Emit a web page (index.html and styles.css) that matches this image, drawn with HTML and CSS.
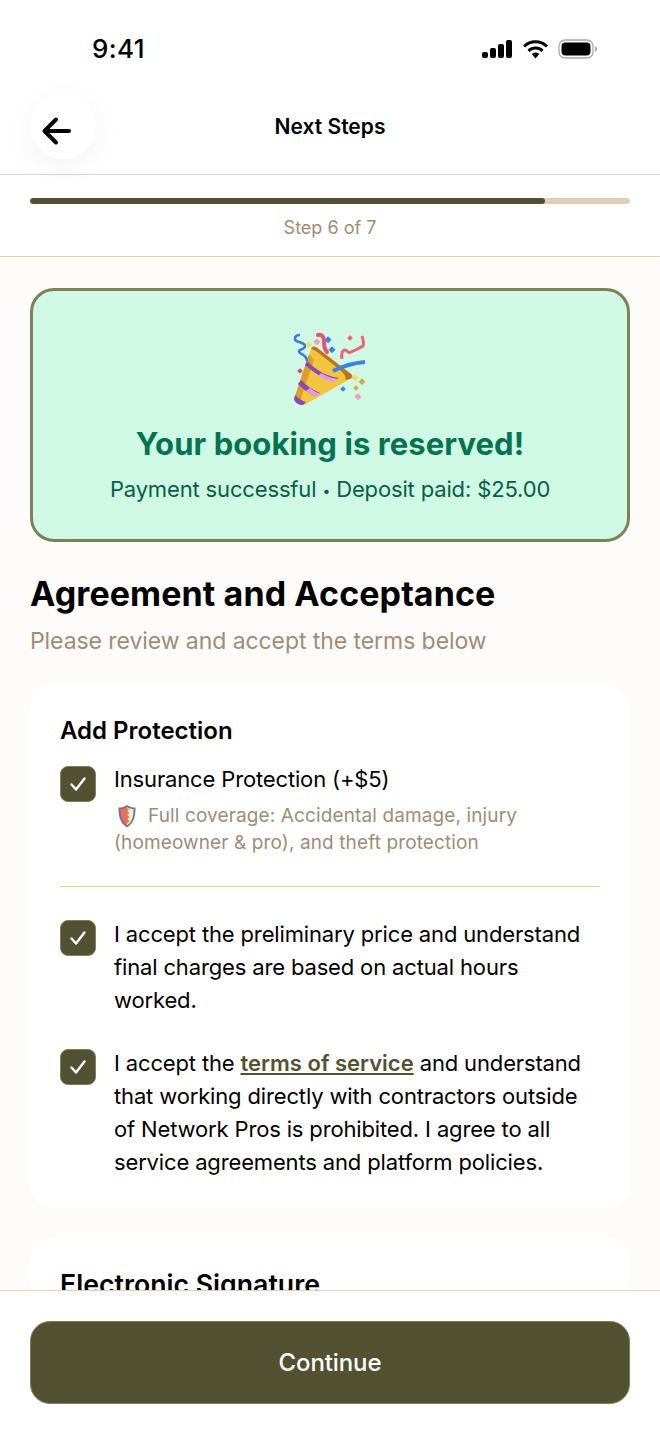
FILE: index.html
```html
<!DOCTYPE html>
<html lang="en">
<head>
  <meta charset="UTF-8">
  <meta name="viewport" content="width=device-width, initial-scale=1.0">
  <title>Next Steps</title>
  <link rel="stylesheet" href="styles.css">
</head>
<body>
  <div class="screen">
    <div class="status-bar">
      <span class="time">9:41</span>
      <div class="status-icons">
        <svg width="30" height="18" viewBox="0 0 30 18"><rect x="0" y="12" width="6" height="6" rx="2"/><rect x="8" y="8" width="6" height="10" rx="2"/><rect x="16" y="4" width="6" height="14" rx="2"/><rect x="24" y="0" width="6" height="18" rx="2"/></svg>
        <svg width="25" height="19" viewBox="0 0 25 19"><path d="M1 6.500a16.500 16.500 0 0 1 23 0" fill="none" stroke="#000" stroke-width="3"/><path d="M5.500 10.800a10.200 10.200 0 0 1 14 0" fill="none" stroke="#000" stroke-width="3"/><path d="M8.800 14a5.400 5.400 0 0 1 7.400 0l-3.700 4.500z"/></svg>
        <svg width="39" height="20" viewBox="0 0 39 20"><rect x="1" y="1" width="34" height="18" rx="6" fill="none" stroke="#a8a8a8" stroke-width="1.300"/><rect x="3.500" y="3.500" width="29" height="13" rx="4"/><path d="M37 7v6c1-.4 2-1.600 2-3s-1-2.600-2-3z" fill="#a8a8a8"/></svg>
      </div>
    </div>

    <header class="top-nav">
      <button class="back-btn" aria-label="Back">
        <svg width="32" height="32" viewBox="0 0 32 32"><path d="M28 17H4M15 5.500 3.500 17 15 28.500" fill="none" stroke="#000" stroke-width="4" stroke-linecap="round" stroke-linejoin="round"/></svg>
      </button>
      <h1 class="nav-title">Next Steps</h1>
    </header>

    <div class="progress-wrap">
      <div class="progress-track"><div class="progress-fill"></div></div>
      <div class="progress-label">Step 6 of 7</div>
    </div>

    <main class="content">
      <section class="banner">
        <svg class="popper" width="76" height="76" viewBox="0 0 76 76">
          <!-- cone -->
          <path d="M3 67 19 19c1-3 3-3 5-2l35 27c2 2 2 4-1 5L12 75c-4 1-10-3-9-8z" fill="#f2c53d"/>
          <path d="M19 19c1-3 3-3 5-2l35 27c2 2 2 4-1 5l-5 1c3-6-7-11-15-18-8-6-14-12-19-13z" fill="#b9761f"/>
          <path d="M17 24 3 66 8 71 22 30z" fill="#d99f2a"/>
          <!-- stripes -->
          <path d="M15 31c8 8 17 14 27 16l5 1-6 3c-10-2-20-9-28-16z" fill="#8b46b8"/>
          <path d="M29 43c5 3 10 5 17 6l-4 3c-6-1-11-3-16-6z" fill="#e29be8"/>
          <path d="M9 50c6 6 12 10 19 13l-5 3c-7-3-13-8-17-12z" fill="#8b46b8"/>
          <path d="M18 58c3 2 7 5 11 6l-5 2c-4-1-7-3-10-5z" fill="#e29be8"/>
          <path d="M3 65c3 3 7 6 11 7l-3 3c-4 0-8-2-9-6z" fill="#8b46b8"/>
          <!-- streamers -->
          <path d="M41 41c10-5 21-8 32-9" fill="none" stroke="#3b82e6" stroke-width="4"/>
          <path d="M8 5C2 5 1 11 7 12c4 1 8 3 5 6-3 2-7 2-4 5 3 2 7 3 7 8" fill="none" stroke="#3b78e0" stroke-width="2.500"/>
          <path d="M26 5c5-1 6 3 6 7s0 7 3 10" fill="none" stroke="#f0506e" stroke-width="4" stroke-linecap="round"/>
          <path d="M50 29c-1-4 0-9 3-9s2 4 6 2 9-4 12-6c1-3 0-7-1-10" fill="none" stroke="#f0607a" stroke-width="3"/>
          <!-- confetti -->
          <rect x="15" y="12" width="5" height="5" fill="#f5dc6a" transform="rotate(45 17 14)"/>
          <rect x="23" y="9" width="5" height="5" fill="#f2a0b8" transform="rotate(45 25 11)"/>
          <rect x="34" y="7" width="5" height="5" fill="#3b82e6" transform="rotate(45 36 9)"/>
          <rect x="38" y="17" width="5" height="5" fill="#3b82e6" transform="rotate(45 40 19)"/>
          <rect x="56" y="6" width="4" height="4" fill="#f0607a" transform="rotate(45 58 8)"/>
          <rect x="6" y="39" width="4" height="4" fill="#e8456a" transform="rotate(45 8 41)"/>
          <rect x="61" y="45" width="5" height="5" fill="#f5dc6a" transform="rotate(45 63 47)"/>
          <rect x="68" y="49" width="5" height="5" fill="#e0a83c" transform="rotate(45 70 51)"/>
          <rect x="62" y="56" width="4" height="4" fill="#e0a83c" transform="rotate(45 64 58)"/>
          <rect x="64" y="64" width="5" height="5" fill="#f2a0b8" transform="rotate(45 66 66)"/>
          <rect x="49" y="57" width="4" height="4" fill="#3b82e6" transform="rotate(45 51 59)"/>
        </svg>
        <h2 class="banner-title">Your booking is reserved!</h2>
        <p class="banner-sub">Payment successful <span class="dot">•</span> Deposit paid: $25.00</p>
      </section>

      <h2 class="section-title">Agreement and Acceptance</h2>
      <p class="section-sub">Please review and accept the terms below</p>

      <section class="card first-card">
        <h3 class="card-title">Add Protection</h3>
        <div class="check-row protection">
          <span class="checkbox"><svg width="20" height="20" viewBox="0 0 20 20"><path d="M3.500 10.500 8 15.500 16.500 4.500" fill="none" stroke="#fff" stroke-width="2.400" stroke-linecap="round" stroke-linejoin="round"/></svg></span>
          <div>
            <div class="check-text">Insurance Protection (+$5)</div>
            <p class="check-note">
              <svg class="shield" width="18" height="24" viewBox="0 0 18 24"><path d="M9 1c3 2 5 2.500 8.500 2.500 0 8-1 15-8.500 20C1.500 18.500.5 11.500.5 3.500 4 3.500 6 3 9 1z" fill="#77776f"/><path d="M9 3c2 1.500 4 2 6.500 2 0 7-1 12.500-6.500 16.500z" fill="#ececea"/><path d="M2.500 5C5 5 7 4.500 9 3v18.500C4 17.500 2.500 12 2.500 5z" fill="#f0637a"/><path d="M8 4v17l3.500-4-2-2 2-2-2-2 2-2-2-2 2-2z" fill="#d8862c"/></svg>Full coverage: Accidental damage, injury (homeowner &amp; pro), and theft protection
            </p>
          </div>
        </div>
        <hr class="divider">
        <div class="check-row">
          <span class="checkbox"><svg width="20" height="20" viewBox="0 0 20 20"><path d="M3.500 10.500 8 15.500 16.500 4.500" fill="none" stroke="#fff" stroke-width="2.400" stroke-linecap="round" stroke-linejoin="round"/></svg></span>
          <div class="check-text">I accept the preliminary price and understand final charges are based on actual hours worked.</div>
        </div>
        <div class="check-row terms">
          <span class="checkbox"><svg width="20" height="20" viewBox="0 0 20 20"><path d="M3.500 10.500 8 15.500 16.500 4.500" fill="none" stroke="#fff" stroke-width="2.400" stroke-linecap="round" stroke-linejoin="round"/></svg></span>
          <div class="check-text">I accept the <a class="terms-link" href="#">terms of service</a> and understand that working directly with contractors outside of Network Pros is prohibited. I agree to all service agreements and platform policies.</div>
        </div>
      </section>

      <section class="card">
        <h3 class="card-title signature-title">Electronic Signature</h3>
      </section>
    </main>

    <footer class="footer">
      <button class="continue-btn">Continue</button>
    </footer>
  </div>
</body>
</html>
```

FILE: styles.css
```css
* {
  box-sizing: border-box;
}
body {
  margin: 0;
  font-family: 'Inter', 'Liberation Sans', sans-serif;
  background: #fff;
  color: #000;
}
.screen {
  height: 1434px;
  display: flex;
  flex-direction: column;
  overflow: hidden;
}
.status-bar {
  height: 93px;
  padding: 0 63px 0 92px;
  display: flex;
  justify-content: space-between;
  align-items: flex-start;
}
.time {
  margin-top: 34px;
  font-size: 26px;
  line-height: 30px;
  font-weight: 500;
  letter-spacing: 0.4px;
}
.status-icons {
  margin-top: 39px;
  display: flex;
  align-items: center;
  gap: 10.5px;
}
.top-nav {
  height: 82px;
  position: relative;
  display: flex;
  justify-content: center;
  border-bottom: 1px solid #d4d4d6;
}
.back-btn {
  position: absolute;
  left: 30px;
  top: 0;
  width: 66px;
  height: 66px;
  border: none;
  border-radius: 50%;
  background: #fff;
  box-shadow: 0 8px 30px rgba(0, 0, 0, 0.05);
  padding: 8px 0 0 0;
  display: flex;
  align-items: center;
  justify-content: center;
}
.back-btn svg {
  margin-left: -13px;
}
.nav-title {
  margin: 20px 0 0;
  font-size: 21px;
  line-height: 28px;
  font-weight: 600;
}
.progress-wrap {
  height: 82px;
  padding: 23px 30px 0;
  border-bottom: 1px solid #e3d3b8;
}
.progress-track {
  height: 6px;
  border-radius: 3px;
  background: #ddd0b5;
  overflow: hidden;
}
.progress-fill {
  width: 85.8%;
  height: 100%;
  border-radius: 3px;
  background: #525233;
}
.progress-label {
  margin-top: 11px;
  text-align: center;
  font-size: 18px;
  line-height: 26px;
  color: #a18c76;
}
.content {
  flex: 1;
  min-height: 0;
  overflow: hidden;
  padding: 31px 30px 0;
  background: #fdfcfa;
}
.banner {
  height: 254px;
  border: 3px solid #7f8058;
  border-radius: 24px;
  background: #cff9e4;
  display: flex;
  flex-direction: column;
  align-items: center;
  padding-top: 39px;
}
.popper {
  display: block;
}
.banner-title {
  margin: 20px 0 0;
  font-size: 31px;
  line-height: 36px;
  font-weight: 700;
  letter-spacing: 0.08px;
  color: #047350;
}
.banner-sub {
  margin: 12px 0 0;
  font-size: 22px;
  line-height: 30px;
  letter-spacing: -0.15px;
  color: #065f46;
}
.dot {
  font-size: 14px;
  vertical-align: 1px;
}
.section-title {
  margin: 31px 0 0;
  font-size: 34px;
  line-height: 42px;
  font-weight: 700;
  letter-spacing: 0.1px;
}
.section-sub {
  margin: 10px 0 0;
  font-size: 23px;
  line-height: 33px;
  letter-spacing: -0.07px;
  color: #a18c76;
}
.card {
  margin-top: 27px;
  padding: 31px 30px 30px;
  border-radius: 24px;
  background: #fff;
}
.first-card {
  padding-bottom: 29px;
}
.first-card + .card {
  margin-top: 30px;
}
.card-title {
  margin: 0;
  font-size: 24px;
  line-height: 30px;
  font-weight: 600;
}
.signature-title {
  font-size: 26.700px;
}
.check-row {
  display: flex;
  gap: 18px;
  align-items: flex-start;
}
.protection {
  margin-top: 18px;
}
.terms {
  margin-top: 30px;
}
.checkbox {
  flex: none;
  width: 36px;
  height: 36px;
  margin-top: 2px;
  border-radius: 8px;
  border: 1px solid #7f8058;
  background: #525233;
  display: flex;
  align-items: center;
  justify-content: center;
}
.check-text {
  font-size: 22px;
  line-height: 33px;
  letter-spacing: -0.15px;
}
.protection .check-text {
  line-height: 30px;
}
.check-note {
  margin: 8px 0 0;
  font-size: 19px;
  line-height: 27px;
  letter-spacing: 0.12px;
  color: #a18c76;
}
.shield {
  vertical-align: -6px;
  margin: 0 12px 0 4px;
}
.divider {
  margin: 30px 0 31px;
  border: none;
  height: 1px;
  background: #dccfae;
}
.terms-link {
  color: #525233;
  font-weight: 600;
  letter-spacing: 0;
  text-decoration: underline;
}
.footer {
  height: 144px;
  flex: none;
  padding: 30px 30px 0;
  background: #fff;
  border-top: 1px solid #e3d3b8;
}
.continue-btn {
  width: 100%;
  height: 83px;
  border: 1px solid #7f8058;
  border-radius: 20px;
  background: #525233;
  color: #fff;
  font-family: inherit;
  font-size: 24px;
  font-weight: 500;
  letter-spacing: -0.1px;
}
```
